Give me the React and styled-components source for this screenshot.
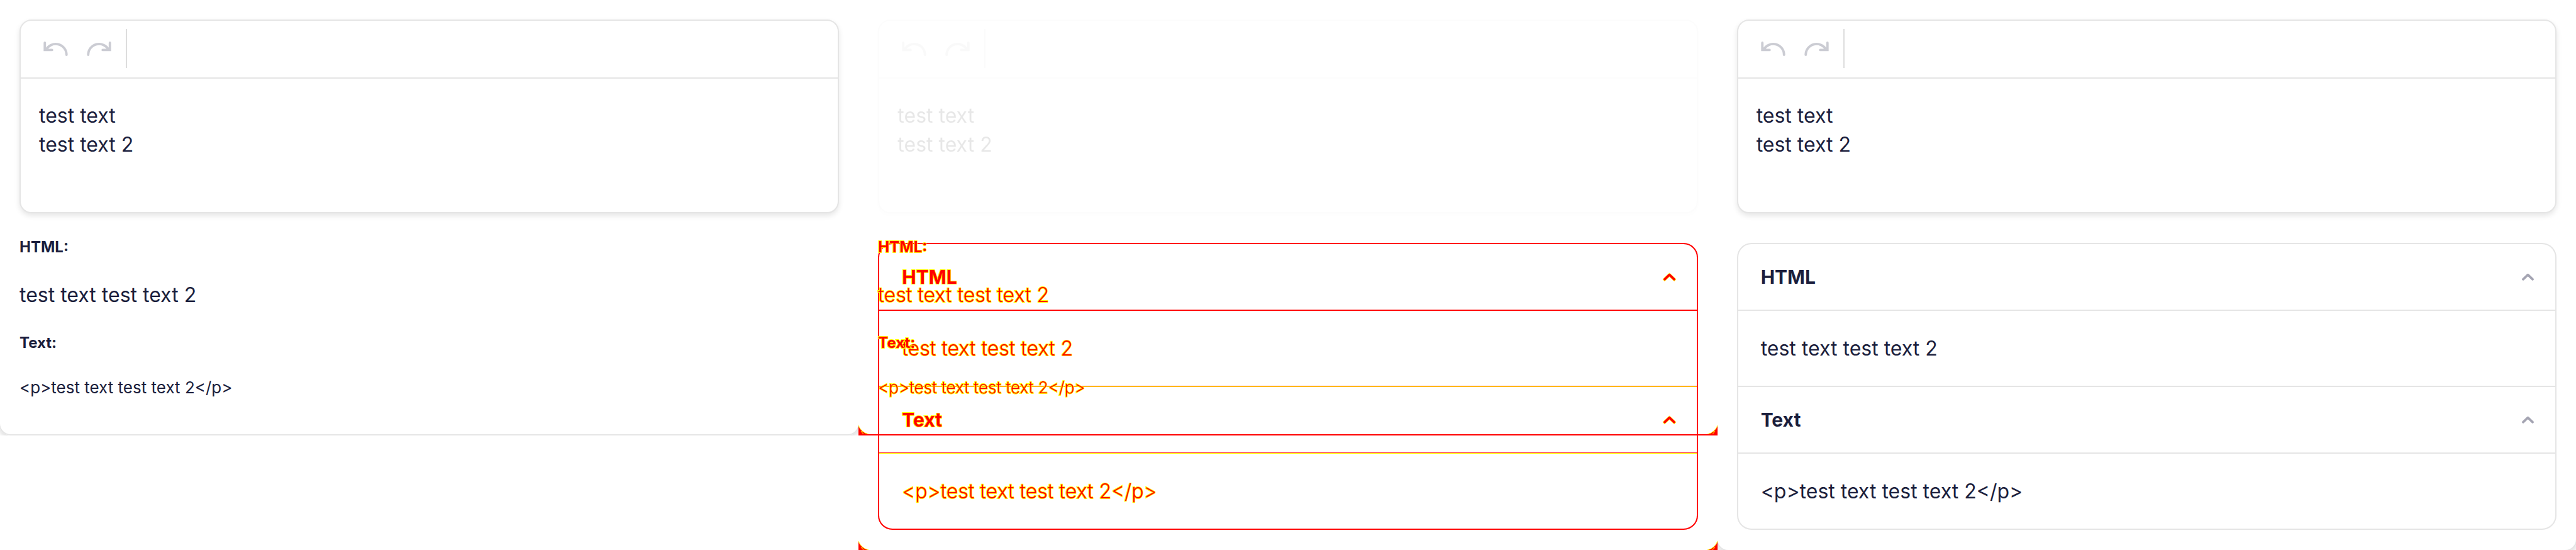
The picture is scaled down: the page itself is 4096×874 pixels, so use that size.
import React, { useState } from "react";
import styled, { createGlobalStyle, css } from "styled-components";

const INK = "#1b1e3c";
const LINE = "#e5e5e5";
const RED = "#ff0000";
const YELLOW = "#ffff00";

const GlobalStyle = createGlobalStyle`
  *, *::before, *::after { box-sizing: border-box; }
  body {
    margin: 0;
    background: #ffffff;
    color: ${INK};
    font-family: Inter, "Open Sans", "Liberation Sans", sans-serif;
    font-size: 32px;
    line-height: 46px;
  }
`;

const diffText = css`
  color: ${RED};
  font-weight: 300;
  -webkit-text-stroke: 2px ${YELLOW};
  paint-order: stroke fill;
`;

const Page = styled.main`
  display: grid;
  grid-template-columns: repeat(3, minmax(0, 1fr));
  min-height: 100vh;
  overflow: hidden;
`;

const Column = styled.section`
  display: flex;
  flex-direction: column;
  align-self: ${(p) => (p.$short ? "start" : "stretch")};
  overflow: hidden;
`;

const Card = styled.div`
  flex: 1;
  margin: 0 -2px ${(p) => (p.$bleed ? "-2px" : "0")};
  padding: 31px 31px ${(p) => (p.$bleed ? "32px" : "56px")};
  border: 2px solid ${LINE};
  border-top: 0;
  border-radius: 0 0 19px 19px;
  box-shadow: 0 4px 8px rgba(0, 0, 0, 0.14);
`;

const Compare = styled.div`
  flex: 1;
  display: flex;
  flex-direction: column;
  padding: 31px 31px 0;
`;

const EditorBox = styled.div`
  border: 2px solid ${LINE};
  border-radius: 19px;
  box-shadow: 0 4px 8px rgba(0, 0, 0, 0.1);
  background: #ffffff;
  overflow: hidden;
  ${(p) =>
    p.$faded &&
    css`
      filter: grayscale(1);
      opacity: 0.1;
    `}
`;

const Toolbar = styled.div`
  display: flex;
  align-items: center;
  padding: 13px 21px 15px;
  border-bottom: 2px solid ${LINE};
`;

const ToolButton = styled.button`
  display: flex;
  align-items: center;
  justify-content: center;
  width: 69px;
  height: 62px;
  padding: 0;
  border: 0;
  background: none;
  color: #cbccd3;
`;

const Divider = styled.span`
  width: 2px;
  height: 62px;
  margin-left: 8px;
  background: #dddddd;
`;

const TextArea = styled.textarea`
  display: block;
  width: 100%;
  height: 212px;
  padding: 36px 29px;
  border: 0;
  outline: 0;
  resize: none;
  background: transparent;
  color: inherit;
  font: inherit;
`;

const Output = styled.div`
  display: flex;
  flex-direction: column;
  gap: 36px;
  padding-top: 37px;
  ${(p) => p.$diff && diffText}
`;

const Label = styled.h4`
  margin: 0;
  font-size: 24px;
  line-height: 34px;
  font-weight: 700;
`;

const Value = styled.p`
  margin: 0;
  font-size: ${(p) => (p.$small ? "26px" : "32px")};
  line-height: ${(p) => (p.$small ? "36px" : "46px")};
`;

const Stack = styled.div`
  display: grid;
  grid-template-columns: minmax(0, 1fr);
  align-items: start;

  & > * {
    grid-area: 1 / 1;
  }
`;

const Edge = styled.div`
  display: flex;
  justify-content: space-between;
  align-items: flex-end;
  height: ${(p) => (p.$cut ? "14px" : "17px")};
  margin: ${(p) => (p.$cut ? "auto" : "5px")} -31px 0;
  border-bottom: ${(p) => (p.$cut ? "0" : `2px solid ${RED}`)};
`;

const AccordionBox = styled.div`
  margin-top: 47px;
  border: 2px solid ${(p) => (p.$diff ? RED : LINE)};
  border-radius: 23px;
  overflow: hidden;
  ${(p) => p.$diff && diffText}
`;

const AccordionHeader = styled.button`
  display: flex;
  align-items: center;
  justify-content: space-between;
  width: 100%;
  height: 104px;
  padding: 0 34px 0 36px;
  border: 0;
  background: none;
  color: inherit;
  font: inherit;
  font-size: 30px;
  font-weight: 700;
  text-align: left;
`;

const AccordionBody = styled.div`
  display: flex;
  align-items: center;
  height: 121px;
  padding: 0 36px;
  border-top: 2px solid ${(p) => (p.$diff ? RED : LINE)};
`;

const AccordionItem = styled.div`
  &:not(:first-child) {
    border-top: 2px solid ${(p) => (p.$diff ? RED : LINE)};
  }

  ${(p) =>
    p.$diff &&
    css`
      &:not(:first-child),
      &:not(:first-child) > ${AccordionBody} {
        border-top-width: 1px;
        padding-top: 1px;
        box-shadow: inset 0 1px ${YELLOW};
      }
    `}
`;

function UndoIcon({ flip }) {
  return (
    <svg width="39" height="23" viewBox="0 0 40 24" fill="none" aria-hidden="true">
      <path
        d={
          flip
            ? "M38 2V14H26M36 13.75A18 18 0 0 0 2 22"
            : "M2 2V14H14M4 13.75A18 18 0 0 1 38 22"
        }
        stroke="currentColor"
        strokeWidth="4"
        strokeLinecap="round"
      />
    </svg>
  );
}

function Chevron({ diff }) {
  const d = "M2 10L10 2.5L18 10";
  return (
    <svg width="19" height="12" viewBox="0 0 20 12" fill="none" overflow="visible" aria-hidden="true">
      {diff && <path d={d} stroke={YELLOW} strokeWidth="5" strokeLinecap="square" />}
      <path
        d={d}
        stroke={diff ? RED : "#a4a4b2"}
        strokeWidth="4"
        strokeLinecap="round"
        strokeLinejoin="round"
      />
    </svg>
  );
}

function Corner({ right }) {
  return (
    <svg width="16" height="14" viewBox="0 0 16 14" aria-hidden="true">
      <path
        d={right ? "M16 0V14H0Q12 11 16 0Z" : "M0 0V14H16Q4 11 0 0Z"}
        fill={RED}
      />
      <path
        d={right ? "M16 0Q12 11 0 14M8 14L12 9" : "M0 0Q4 11 16 14M8 14L4 9"}
        fill="none"
        stroke={YELLOW}
      />
    </svg>
  );
}

function Editor({ faded, label }) {
  return (
    <EditorBox $faded={faded}>
      <Toolbar role="toolbar" aria-label="History">
        <ToolButton type="button" aria-label="Undo" disabled>
          <UndoIcon />
        </ToolButton>
        <ToolButton type="button" aria-label="Redo" disabled>
          <UndoIcon flip />
        </ToolButton>
        <Divider />
      </Toolbar>
      <TextArea
        aria-label={label}
        spellCheck={false}
        defaultValue={"test text\ntest text 2"}
      />
    </EditorBox>
  );
}

function PlainOutput({ diff, children }) {
  return (
    <Output $diff={diff}>
      <Label>HTML:</Label>
      <Value>test text test text 2</Value>
      <Label>Text:</Label>
      <Value $small>{"<p>test text test text 2</p>"}</Value>
      {children}
    </Output>
  );
}

function Panel({ title, diff, children }) {
  const [open, setOpen] = useState(true);
  return (
    <AccordionItem $diff={diff}>
      <AccordionHeader
        type="button"
        aria-expanded={open}
        onClick={() => setOpen(!open)}
      >
        {title}
        <Chevron diff={diff} />
      </AccordionHeader>
      {open && (
        <AccordionBody $diff={diff}>
          <Value>{children}</Value>
        </AccordionBody>
      )}
    </AccordionItem>
  );
}

function Accordion({ diff }) {
  return (
    <AccordionBox $diff={diff}>
      <Panel title="HTML" diff={diff}>
        test text test text 2
      </Panel>
      <Panel title="Text" diff={diff}>
        {"<p>test text test text 2</p>"}
      </Panel>
    </AccordionBox>
  );
}

export default function App() {
  return (
    <>
      <GlobalStyle />
      <Page>
        <Column $short>
          <Card>
            <Editor label="Editor before" />
            <PlainOutput />
          </Card>
        </Column>
        <Column>
          <Compare>
            <Editor faded label="Editor difference" />
            <Stack>
              <Accordion diff />
              <PlainOutput diff>
                <Edge>
                  <Corner />
                  <Corner right />
                </Edge>
              </PlainOutput>
            </Stack>
            <Edge $cut>
              <Corner />
              <Corner right />
            </Edge>
          </Compare>
        </Column>
        <Column>
          <Card $bleed>
            <Editor label="Editor after" />
            <Accordion />
          </Card>
        </Column>
      </Page>
    </>
  );
}
